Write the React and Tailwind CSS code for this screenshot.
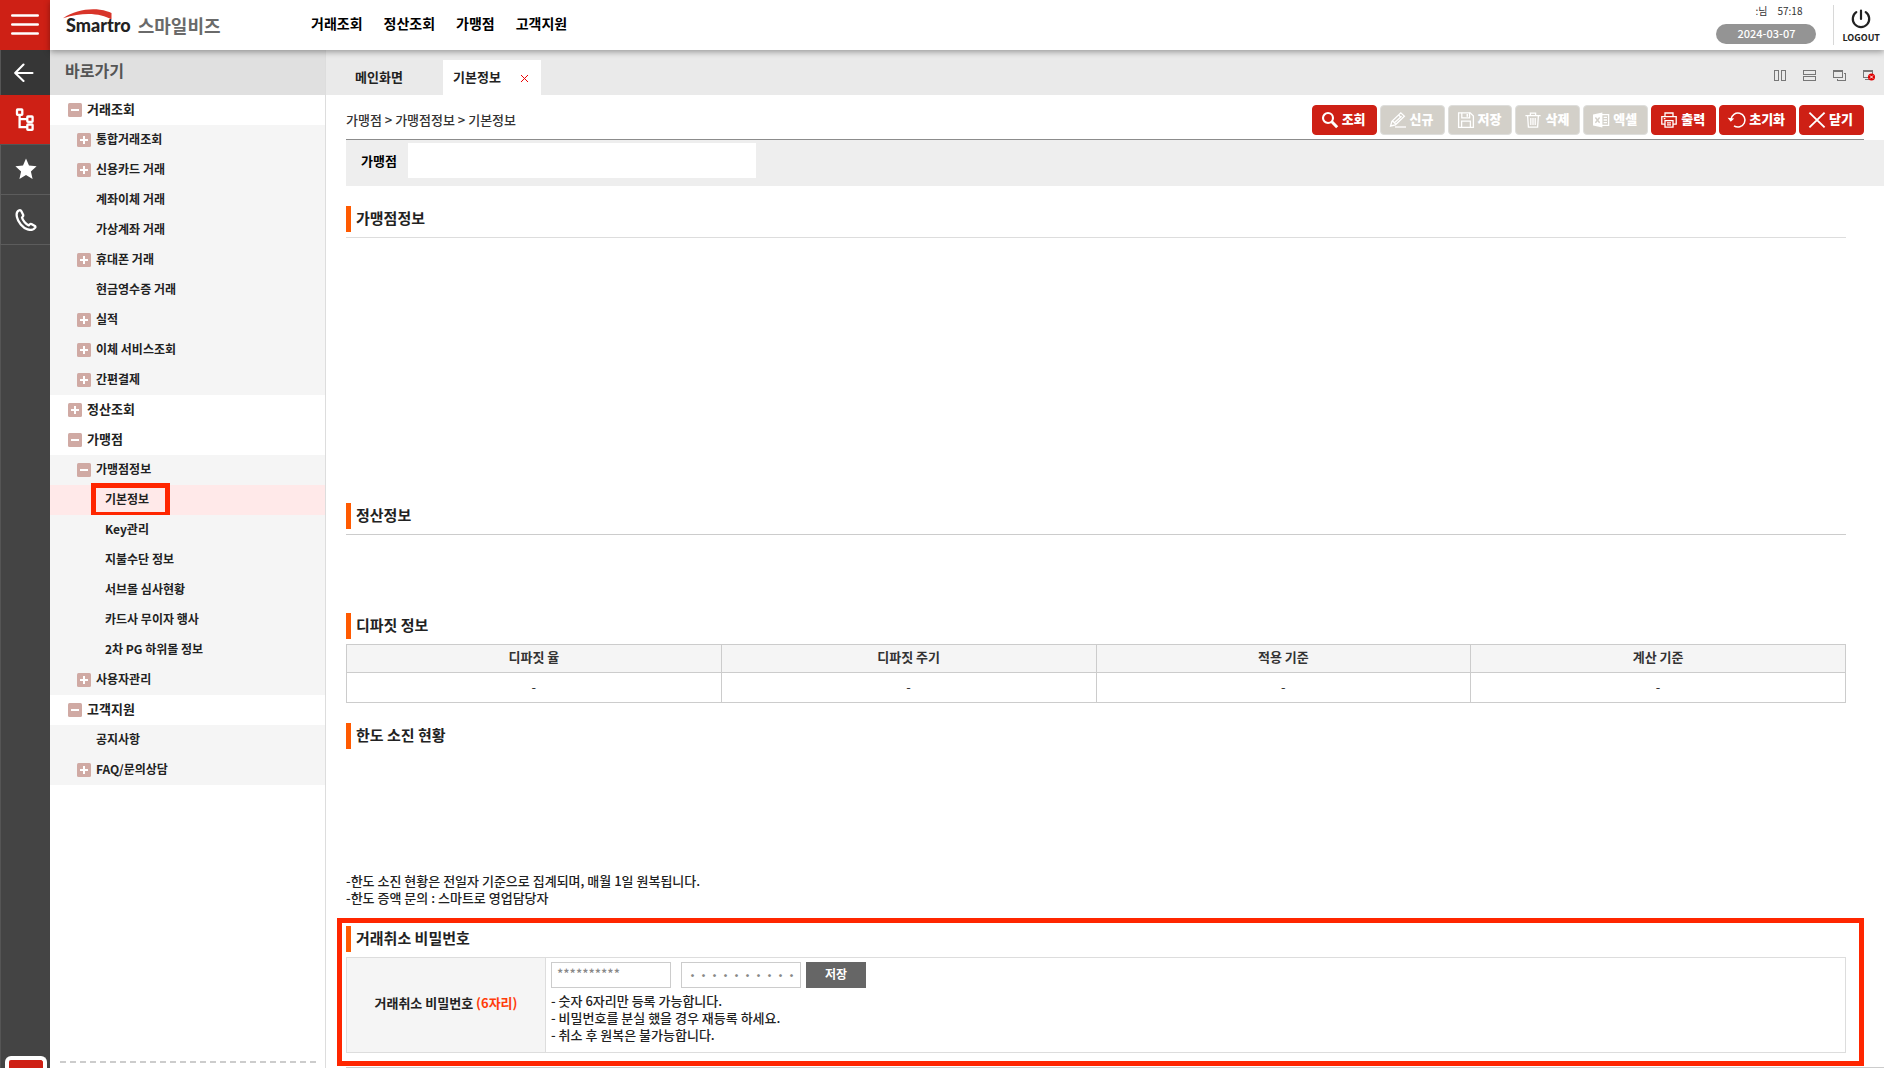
import React, { useState } from "react";

const MENU = [
  { label: "거래조회", level: 1, toggle: "minus" },
  { label: "통합거래조회", level: 2, toggle: "plus" },
  { label: "신용카드 거래", level: 2, toggle: "plus" },
  { label: "계좌이체 거래", level: 2 },
  { label: "가상계좌 거래", level: 2 },
  { label: "휴대폰 거래", level: 2, toggle: "plus" },
  { label: "현금영수증 거래", level: 2 },
  { label: "실적", level: 2, toggle: "plus" },
  { label: "이체 서비스조회", level: 2, toggle: "plus" },
  { label: "간편결제", level: 2, toggle: "plus" },
  { label: "정산조회", level: 1, toggle: "plus" },
  { label: "가맹점", level: 1, toggle: "minus" },
  { label: "가맹점정보", level: 2, toggle: "minus" },
  { label: "기본정보", level: 3, current: true },
  { label: "Key관리", level: 3 },
  { label: "지불수단 정보", level: 3 },
  { label: "서브몰 심사현황", level: 3 },
  { label: "카드사 무이자 행사", level: 3 },
  { label: "2차 PG 하위몰 정보", level: 3 },
  { label: "사용자관리", level: 2, toggle: "plus" },
  { label: "고객지원", level: 1, toggle: "minus" },
  { label: "공지사항", level: 2 },
  { label: "FAQ/문의상담", level: 2, toggle: "plus" },
];

const ROW_STYLE = {
  1: "bg-white pl-[18px] text-[13px]",
  2: "bg-[#f5f5f5] pl-[27px] text-[12px]",
  3: "bg-[#f5f5f5] pl-9 text-[12px]",
};

function ToggleIcon({ kind }) {
  return (
    <svg width="14" height="14" viewBox="0 0 14 14" className="shrink-0">
      <rect width="14" height="14" rx="1.5" fill="#d0aaa4" />
      <path d="M3 7h8" stroke="#fff" strokeWidth="2" />
      {kind === "plus" && <path d="M7 3v8" stroke="#fff" strokeWidth="2" />}
    </svg>
  );
}

function MenuRow({ item }) {
  const style = item.current ? "bg-[#ffe9e9] pl-9 text-[12px]" : ROW_STYLE[item.level];
  return (
    <li>
      <button
        type="button"
        className={`relative flex h-[30px] w-full items-center gap-[5px] text-left font-bold text-[#222] ${style}`}
      >
        {item.toggle ? <ToggleIcon kind={item.toggle} /> : <span className="w-[14px]" />}
        <span className="pb-0.5">{item.label}</span>
        {item.current && (
          <span className="absolute -top-0.5 left-[41px] h-[34px] w-[79px] border-5 border-[#ff2600]" />
        )}
      </button>
    </li>
  );
}

function Rail() {
  return (
    <div className="flex w-[50px] shrink-0 flex-col bg-[#444]">
      <button type="button" aria-label="전체메뉴" className="flex h-[50px] items-center justify-center bg-[#ce2015]">
        <svg width="28" height="22" viewBox="0 0 28 22" stroke="#fff" strokeWidth="2.6" strokeLinecap="round">
          <path d="M1.3 1.5h25.4M1.3 10.5h25.4M1.3 19.5h25.4" />
        </svg>
      </button>
      <button type="button" aria-label="뒤로" className="flex h-[45px] items-center justify-center border-l border-[#555] bg-[#363636] pr-[3px]">
        <svg width="20" height="20" viewBox="0 0 20 20" fill="none" stroke="#fff" strokeWidth="2.1" strokeLinecap="round" strokeLinejoin="round">
          <path d="M18.5 10H1.5M9.5 1.5L1.2 10L9.5 18" />
        </svg>
      </button>
      <button type="button" aria-label="메뉴 트리" className="flex h-[50px] items-center justify-center border-b border-[#555] bg-[#ce2015]">
        <svg width="20" height="24" viewBox="0 0 20 24" fill="none" stroke="#fff" strokeWidth="2.3">
          <rect x="2" y="1.5" width="5.3" height="5.3" rx="0.6" />
          <rect x="12.3" y="8.5" width="5.3" height="5.3" rx="0.6" />
          <rect x="12.3" y="16.5" width="5.3" height="5.3" rx="0.6" />
          <path d="M4.6 7V19.2H12M4.6 11.2H12" />
        </svg>
      </button>
      <button type="button" aria-label="즐겨찾기" className="flex h-[50px] items-center justify-center border-b border-l border-[#5c5c5c] pb-0.5">
        <svg width="22" height="22" viewBox="0 0 22 22" fill="#fff">
          <path d="M11 .5L14 7.6L21.6 8.3L15.9 13.4L17.6 21L11 17L4.4 21L6.1 13.4L.4 8.3L8 7.6Z" />
        </svg>
      </button>
      <button type="button" aria-label="전화문의" className="flex h-[50px] items-center justify-center border-b border-l border-[#5c5c5c]">
        <svg width="22" height="22" viewBox="0 0 22 22" fill="none" stroke="#fff" strokeWidth="2.3" strokeLinejoin="round">
          <path d="M4.3 1.3C2 2.2 1.2 5 2 8.2C3 13 7.5 18.6 12.6 20.4C15.6 21.4 18.6 20.8 20.2 18.6C20.6 18 20.4 17.4 19.9 17.1L16.4 15C15.8 14.7 15.3 14.8 14.9 15.2L13.7 16.4C11.3 15.6 7.6 11.4 7 8.6L8 7.2C8.3 6.8 8.3 6.3 8.1 5.8L6.4 2.2C6 1.4 5.2 1 4.3 1.3Z" />
        </svg>
      </button>
      <div className="flex flex-1 items-end justify-center overflow-hidden border-l border-[#555]">
        <div className="h-3 w-[42px] rounded-t-[6px] border-x-4 border-t-4 border-white bg-[#ce2015]" />
      </div>
    </div>
  );
}

function Logo() {
  return (
    <a href="#home" className="flex items-end">
      <span className="relative pl-[3px] font-['Lato'] text-[18px] leading-[24px] font-black text-[#222]">
        <svg width="50" height="11" viewBox="0 0 50 11" className="absolute -top-1 left-0">
          <path d="M0 9.2C11 1.8 25 -.8 37 .8C42 1.5 46 2.7 48.5 4V10.6C38 4.6 22 2.6 0 9.2Z" fill="#d8352a" />
        </svg>
        Smartro
      </span>
      <span className="ml-[7px] text-[18px] leading-[24px] font-bold text-[#6a6a6a]">스마일비즈</span>
    </a>
  );
}

function Header() {
  return (
    <header className="relative z-10 flex h-[50px] shrink-0 items-center bg-white pr-1 pl-[13px] shadow-[0_2px_6px_rgba(0,0,0,0.35)]">
      <div className="w-[248px]">
        <Logo />
      </div>
      <nav className="flex gap-[21px] pb-1 text-[14px] leading-[20px] font-bold text-black">
        <a href="#trade">거래조회</a>
        <a href="#settle">정산조회</a>
        <a href="#store">가맹점</a>
        <a href="#support">고객지원</a>
      </nav>
      <div className="ml-auto flex h-10 items-start">
        <div className="flex w-[100px] flex-col">
          <div className="flex h-[19px] items-start justify-end gap-2.5 pr-[14px] text-[10px] leading-[12px] text-[#333]">
            <span>:님</span>
            <span>57:18</span>
          </div>
          <div className="h-5 rounded-full bg-[#949494] text-center text-[11px] leading-[19px] font-medium text-white">2024-03-07</div>
        </div>
        <button type="button" className="ml-[17px] flex h-10 flex-col items-center border-l border-[#d8d8d8] pt-1 pl-2">
          <svg width="20" height="20" viewBox="0 0 20 20" fill="none" stroke="#222" strokeWidth="2.2" strokeLinecap="round">
            <path d="M10 1.5V10M5.3 3.2A8.2 8.2 0 1 0 14.7 3.2" />
          </svg>
          <span className="mt-0.5 text-[9px] leading-[14px] font-bold text-[#222]">LOGOUT</span>
        </button>
      </div>
    </header>
  );
}

function Sidebar() {
  return (
    <aside className="flex w-[276px] shrink-0 flex-col border-r border-[#ddd] bg-white">
      <h2 className="h-[45px] bg-[#e0e0e0] pl-[15px] text-[16px] leading-[40px] font-bold text-[#555]">바로가기</h2>
      <ul>
        {MENU.map((item) => (
          <MenuRow key={item.label + item.level} item={item} />
        ))}
      </ul>
      <svg className="mt-auto mb-[5px] ml-[10px] h-0.5 w-[256px]">
        <line x1="0" y1="1" x2="256" y2="1" stroke="#ccc" strokeWidth="2" strokeDasharray="6 4" />
      </svg>
    </aside>
  );
}

function WindowIcon({ label, children }) {
  return (
    <button type="button" aria-label={label}>
      <svg width="14" height="12" viewBox="0 0 14 12" fill="none" stroke="#777" shapeRendering="crispEdges">
        {children}
      </svg>
    </button>
  );
}

function TabBar() {
  return (
    <div className="flex h-[45px] shrink-0 items-end bg-[#eaeaea] pr-[7px]">
      <button type="button" className="h-[35px] w-[117px] pb-0.5 pl-[29px] text-left text-[13px] font-bold text-[#222]">
        메인화면
      </button>
      <div className="flex h-[35px] w-[98px] items-center justify-between bg-white pr-3 pb-0.5 pl-[10px]">
        <span className="text-[13px] font-bold text-[#222]">기본정보</span>
        <button type="button" aria-label="탭 닫기" className="pt-1">
          <svg width="9" height="9" viewBox="0 0 9 9" stroke="#e00" strokeWidth="1">
            <path d="M1 1L8 8M8 1L1 8" />
          </svg>
        </button>
      </div>
      <div className="ml-auto flex h-[39px] items-center gap-4">
        <WindowIcon label="세로 정렬">
          <rect x="1.5" y="0.5" width="4" height="10" />
          <rect x="8.5" y="0.5" width="4" height="10" />
        </WindowIcon>
        <WindowIcon label="가로 정렬">
          <rect x="0.5" y="0.5" width="12" height="4" />
          <rect x="0.5" y="6.5" width="12" height="4" />
        </WindowIcon>
        <WindowIcon label="겹쳐 보기">
          <path d="M10.5 3.5H12.5V10.5H4.5V8.5" />
          <rect x="0.5" y="0.5" width="9" height="7" />
          <path d="M0 1.5H10" />
        </WindowIcon>
        <WindowIcon label="모두 닫기">
          <rect x="0.5" y="0.5" width="9" height="7" />
          <path d="M0 1.5H10M2 9.5H8" />
          <circle cx="8.5" cy="7" r="3.5" fill="#e00000" stroke="none" shapeRendering="auto" />
          <path d="M7 5.5L10 8.5M10 5.5L7 8.5" stroke="#fff" shapeRendering="auto" />
        </WindowIcon>
      </div>
    </div>
  );
}

const ICONS = {
  search: (
    <>
      <circle cx="6" cy="6" r="5" strokeWidth="2.1" />
      <path d="M9.8 9.8L15.2 15.2" strokeWidth="3" />
    </>
  ),
  pencil: (
    <>
      <path d="M.6 14L1.9 9.4L10.8 .8L14.4 4.2L5.4 12.8ZM8.6 3L12.2 6.4M2.6 9L6 12.4M4.4 10.8L11.6 4.2" />
      <path d="M5 15H16" />
    </>
  ),
  save: (
    <>
      <path d="M.6 .8H12.2L15.4 4V15.4H.6Z" />
      <path d="M3.8 .8V5.8H11.6V.8M3.6 15.4V9.2H12.4V15.4" />
      <path d="M9.3 2V4.8" strokeWidth="1.6" />
    </>
  ),
  trash: (
    <>
      <path d="M.4 3.6H15.6M5.4 3.4V1.2H10.6V3.4M2.6 3.8L3.4 15.2H12.6L13.4 3.8" />
      <path d="M5.8 6V13M8 6V13M10.2 6V13" />
    </>
  ),
  excel: (
    <>
      <path d="M0 2.4L9.4 .4V15.6L0 13.6Z" fill="#fff" stroke="none" />
      <path d="M2.4 5.5L6.6 10.8M6.6 5.5L2.4 10.8" stroke="#d3d0c9" strokeWidth="1.4" />
      <path d="M9 2.6H15.6V13.4H9M10.6 5.4H14M10.6 8H14M10.6 10.6H14" />
    </>
  ),
  print: (
    <>
      <path d="M4 4.5V1H12V4.5M4 12.2H.8V4.6H15.2V12.2H12" />
      <path d="M4 8.6H12V15.2H4Z" />
      <path d="M2.8 6.6H4.4M6 10.8H10M6 12.8H10" />
    </>
  ),
  reset: (
    <>
      <path d="M2 7.4A7 7 0 1 1 5 13.8" strokeWidth="1.5" />
      <path d="M-1.4 5.8L1.8 9.8L5.2 6.6Z" fill="#fff" stroke="none" />
    </>
  ),
  close: <path d="M.4 .6L15.6 15.4M15.6 .6L.4 15.4" strokeWidth="1.9" />,
};

const ACTIONS = [
  { label: "조회", icon: "search" },
  { label: "신규", icon: "pencil", disabled: true },
  { label: "저장", icon: "save", disabled: true },
  { label: "삭제", icon: "trash", disabled: true },
  { label: "엑셀", icon: "excel", disabled: true },
  { label: "출력", icon: "print" },
  { label: "초기화", icon: "reset" },
  { label: "닫기", icon: "close" },
];

function ActionButton({ label, icon, disabled }) {
  const tone = disabled ? "border-[#dededc] bg-[#d3d0c9]" : "border-[#ce2015] bg-[#ce2015]";
  return (
    <button
      type="button"
      disabled={disabled}
      className={`flex h-[30px] items-center gap-1 rounded-[4px] border pr-[10px] pl-[9px] text-[13px] font-black text-white ${tone}`}
    >
      <svg width="16" height="16" viewBox="0 0 16 16" fill="none" stroke="#fff" strokeWidth="1.3" className="shrink-0 overflow-visible">
        {ICONS[icon]}
      </svg>
      <span className="pb-0.5">{label}</span>
    </button>
  );
}

function Toolbar() {
  return (
    <div className="mx-5 flex shrink-0 items-center border-b border-[#8c8c8c] pt-[10px] pb-1">
      <p className="text-[13px] leading-[20px] font-medium text-[#333]">가맹점 &gt; 가맹점정보 &gt; 기본정보</p>
      <div className="ml-auto flex gap-[3px]">
        {ACTIONS.map((a) => (
          <ActionButton key={a.label} {...a} />
        ))}
      </div>
    </div>
  );
}

function SectionTitle({ children }) {
  return (
    <h3 className="mb-[5px] h-[26px] border-l-5 border-[#ff5a00] pl-[5px] text-[15px] leading-[24px] font-bold text-[#222]">
      {children}
    </h3>
  );
}

function DepositTable() {
  return (
    <table className="w-full table-fixed border-collapse text-center text-[13px] text-[#333]">
      <thead>
        <tr className="h-7 bg-[#f5f5f5]">
          {["디파짓 율", "디파짓 주기", "적용 기준", "계산 기준"].map((h) => (
            <th key={h} className="border border-[#ccc] pb-1 leading-[20px] font-bold">
              {h}
            </th>
          ))}
        </tr>
      </thead>
      <tbody>
        <tr className="h-[30px]">
          {[0, 1, 2, 3].map((i) => (
            <td key={i} className="border border-[#ccc] pb-0.5 leading-[20px]">
              -
            </td>
          ))}
        </tr>
      </tbody>
    </table>
  );
}

function CancelPassword() {
  const [first, setFirst] = useState("**********");
  const [second, setSecond] = useState("・・・・・・・・・・");
  return (
    <section className="relative">
      <SectionTitle>거래취소 비밀번호</SectionTitle>
      <div className="flex border border-[#ddd]">
        <div className="flex w-[199px] items-center justify-center border-r border-[#ddd] bg-[#f5f5f5] pb-1 text-[13px] font-bold text-[#222]">
          <label htmlFor="cancel-pw">
            거래취소 비밀번호 <span className="text-[#ff3c0a]">(6자리)</span>
          </label>
        </div>
        <div className="px-[5px] pt-1 pb-[9px]">
          <div className="flex">
            <input
              id="cancel-pw"
              value={first}
              onChange={(e) => setFirst(e.target.value)}
              className="h-[26px] w-[120px] border border-[#ccc] bg-white px-[5px] pb-1 text-[13px] font-medium text-[#888] outline-none"
            />
            <input
              aria-label="비밀번호 확인"
              value={second}
              onChange={(e) => setSecond(e.target.value)}
              className="ml-[10px] h-[26px] w-[120px] border border-[#ccc] bg-white pl-[5px] text-[11px] font-bold text-[#888] outline-none"
            />
            <button type="button" className="ml-[5px] h-[26px] w-[60px] bg-[#666] pb-0.5 text-[12px] font-bold text-white">
              저장
            </button>
          </div>
          <ul className="mt-1 text-[13px] leading-[17px] font-medium text-[#222]">
            <li>- 숫자 6자리만 등록 가능합니다.</li>
            <li>- 비밀번호를 분실 했을 경우 재등록 하세요.</li>
            <li>- 취소 후 원복은 불가능합니다.</li>
          </ul>
        </div>
      </div>
      <div className="pointer-events-none absolute -top-2 -right-[18px] -bottom-[13px] -left-[9px] border-5 border-[#ff2600]" />
    </section>
  );
}

export default function App() {
  return (
    <div className="flex h-screen overflow-hidden bg-white font-['Noto_Sans_CJK_KR',sans-serif]">
      <Rail />
      <div className="flex min-w-0 flex-1 flex-col">
        <Header />
        <div className="flex min-h-0 flex-1">
          <Sidebar />
          <main className="flex min-w-0 flex-1 flex-col">
            <TabBar />
            <Toolbar />
            <div className="ml-5 flex shrink-0 items-start bg-[#eee] pt-[3px] pb-2 pl-[15px]">
              <label htmlFor="store" className="w-[47px] text-[13px] leading-[35px] font-bold text-black">
                가맹점
              </label>
              <input id="store" className="h-[35px] w-[348px] bg-white px-2 text-[13px] outline-none" />
            </div>
            <div className="mt-5 mr-[38px] ml-5 flex shrink-0 flex-col gap-5">
              <section>
                <SectionTitle>가맹점정보</SectionTitle>
                <div className="h-[246px] border-t border-[#ddd]" />
              </section>
              <section>
                <SectionTitle>정산정보</SectionTitle>
                <div className="h-[59px] border-t border-[#ccc]" />
              </section>
              <section>
                <SectionTitle>디파짓 정보</SectionTitle>
                <DepositTable />
              </section>
              <section>
                <SectionTitle>한도 소진 현황</SectionTitle>
                <div className="flex h-[152px] flex-col justify-end text-[13px] leading-[17px] font-medium text-[#222]">
                  <p>-한도 소진 현황은 전일자 기준으로 집계되며, 매월 1일 원복됩니다.</p>
                  <p>-한도 증액 문의 : 스마트로 영업담당자</p>
                </div>
              </section>
              <CancelPassword />
            </div>
            <div className="mt-[14px] ml-5 border-t border-[#ccc]" />
          </main>
        </div>
      </div>
    </div>
  );
}
